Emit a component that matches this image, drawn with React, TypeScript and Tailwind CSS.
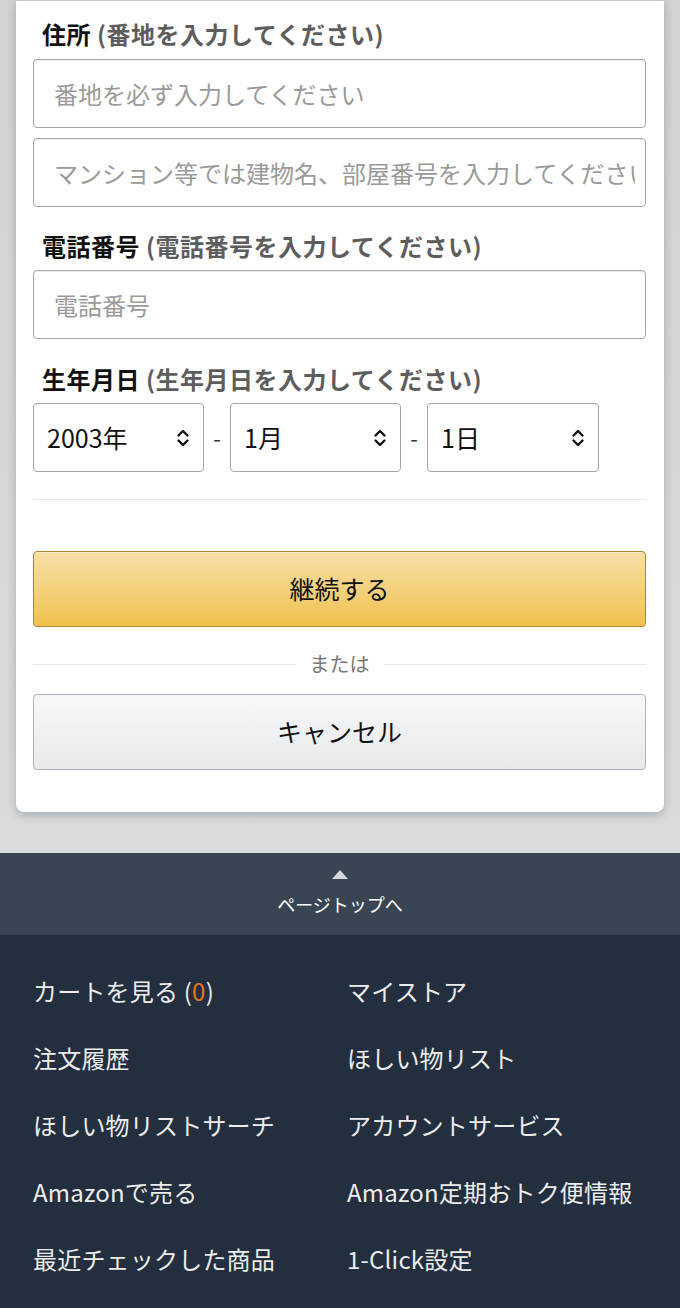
import React from "react";

const font = { fontFamily: '"Noto Sans CJK JP", "Noto Sans", sans-serif' };

function Chevron() {
  return (
    <svg width="14" height="18" viewBox="0 0 14 18" fill="none" stroke="#111" strokeWidth="2.4" strokeLinecap="round" strokeLinejoin="round">
      <path d="M2.5 6.5 L7 2 L11.5 6.5" />
      <path d="M2.5 11.5 L7 16 L11.5 11.5" />
    </svg>
  );
}

function Label({ main, sub }: { main: string; sub: string }) {
  return (
    <div className="pl-[9px] text-[24px] tracking-[0.5px] leading-[30px] font-bold text-[#111] whitespace-nowrap">
      {main} <span className="text-[#5d5d5d]">({sub})</span>
    </div>
  );
}

function Input({ placeholder }: { placeholder: string }) {
  return (
    <div className="h-[69px] rounded-[4px] border border-[#a6a6a6] bg-white shadow-[inset_0_1px_0_rgba(0,0,0,0.07)] flex items-center pl-[20px] pr-[10px] overflow-hidden">
      <span className="text-[24px] text-[#9a9a9a] whitespace-nowrap overflow-hidden">{placeholder}</span>
    </div>
  );
}

function Select({ value, w }: { value: string; w: string }) {
  return (
    <div className={`${w} h-[69px] rounded-[4px] border border-[#a6a6a6] bg-white flex items-center justify-between pl-[13px] pr-[13px]`}>
      <span className="text-[25px] text-[#111]">{value}</span>
      <Chevron />
    </div>
  );
}

function Dash() {
  return <div className="w-[26px] text-center text-[22px] text-[#333]">-</div>;
}

const links: [string, string][] = [
  ["カートを見る", "マイストア"],
  ["注文履歴", "ほしい物リスト"],
  ["ほしい物リストサーチ", "アカウントサービス"],
  ["Amazonで売る", "Amazon定期おトク便情報"],
  ["最近チェックした商品", "1-Click設定"],
];

export default function App() {
  return (
    <div className="w-[680px] min-h-[1308px] bg-[#d6d9dc]" style={font}>
      <div className="pt-[1px] px-[16px] pb-[41px] bg-gradient-to-b from-[#cfd3d6] to-[#d9dcdf]">
        <div className="bg-white rounded-b-[8px] shadow-[0_3px_10px_rgba(0,0,0,0.22)] pt-[18px] pl-[17px] pr-[18px] pb-[42px]">
          <Label main="住所" sub="番地を入力してください" />
          <div className="mt-[10px] flex flex-col gap-[10px]">
            <Input placeholder="番地を必ず入力してください" />
            <Input placeholder="マンション等では建物名、部屋番号を入力してください" />
          </div>
          <div className="mt-[24px]">
            <Label main="電話番号" sub="電話番号を入力してください" />
          </div>
          <div className="mt-[9px]">
            <Input placeholder="電話番号" />
          </div>
          <div className="mt-[25px]">
            <Label main="生年月日" sub="生年月日を入力してください" />
          </div>
          <div className="mt-[9px] flex items-center">
            <Select value="2003年" w="w-[171px]" />
            <Dash />
            <Select value="1月" w="w-[171px]" />
            <Dash />
            <Select value="1日" w="w-[172px]" />
          </div>
          <div className="mt-[27px] h-[1px] bg-[#e7e7e7]" />
          <div className="mt-[51px] h-[76px] rounded-[4px] border border-[#a88734] bg-gradient-to-b from-[#f7dfa5] to-[#f0c14b] flex items-center justify-center shadow-[inset_0_1px_0_rgba(255,255,255,0.4)]">
            <span className="text-[25px] text-[#111]">継続する</span>
          </div>
          <div className="mt-[23px] mb-[16px] flex items-center">
            <div className="flex-1 h-[1px] bg-[#e7e7e7]" />
            <span className="px-[14px] text-[20px] leading-[28px] text-[#767676]">または</span>
            <div className="flex-1 h-[1px] bg-[#e7e7e7]" />
          </div>
          <div className="h-[76px] rounded-[4px] border border-[#adb1b8] bg-gradient-to-b from-[#f7f8fa] to-[#e7e9ec] flex items-center justify-center">
            <span className="text-[25px] text-[#111]">キャンセル</span>
          </div>
        </div>
      </div>
      <div className="h-[82px] bg-[#3a4553] flex flex-col items-center pt-[17px]">
        <svg width="16" height="9" viewBox="0 0 16 9">
          <path d="M8 0 L16 9 L0 9 Z" fill="#d5d7da" />
        </svg>
        <span className="mt-[12px] text-[18px] leading-[26px] text-white">ページトップへ</span>
      </div>
      <div className="bg-[#232f3e] pt-[22px] pb-[40px] pl-[33px]">
        <div className="grid grid-cols-[314px_1fr]">
          {links.map(([a, b], i) => (
            <React.Fragment key={i}>
              <div className="h-[67px] flex items-center text-[24px] tracking-[0.2px] text-[#ececec] whitespace-nowrap">
                {i === 0 ? (
                  <span>
                    {a} (<span className="text-[#e47911]">0</span>)
                  </span>
                ) : (
                  a
                )}
              </div>
              <div className="h-[67px] flex items-center text-[24px] tracking-[0.2px] text-[#ececec] whitespace-nowrap">{b}</div>
            </React.Fragment>
          ))}
        </div>
      </div>
    </div>
  );
}
